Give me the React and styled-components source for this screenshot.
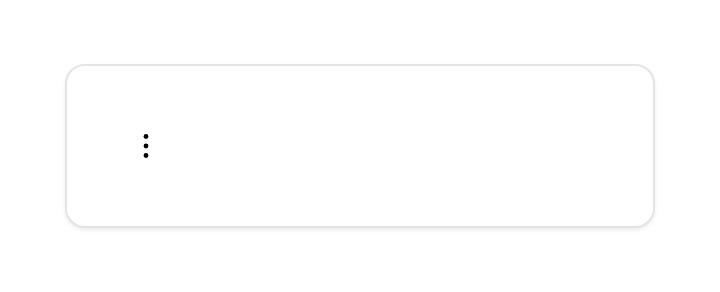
import React from "react";
import styled, { createGlobalStyle } from "styled-components";

const Global = createGlobalStyle`
  html, body { margin: 0; padding: 0; background: #ffffff; font-family: "Roboto", "Liberation Sans", sans-serif; }
`;

const Page = styled.div`
  padding: 64px 65px;
  box-sizing: border-box;
  width: 720px;
  height: 292px;
`;

const Card = styled.div`
  box-sizing: border-box;
  height: 164px;
  border: 2px solid #e4e4e4;
  border-radius: 20px;
  background: #fff;
  box-shadow: 0 2px 4px rgba(0, 0, 0, 0.08);
  display: flex;
  align-items: center;
  padding-left: 67px;
`;

const MenuButton = styled.button`
  width: 24px;
  height: 32px;
  padding: 0;
  border: none;
  background: transparent;
  display: flex;
  align-items: center;
  justify-content: center;
  cursor: pointer;
`;

const Dots = () => (
  <svg width="24" height="32" viewBox="0 0 24 32" aria-hidden="true">
    <circle cx="12" cy="6.5" r="2.4" fill="#000" />
    <circle cx="12" cy="16" r="2.4" fill="#000" />
    <circle cx="12" cy="25.5" r="2.4" fill="#000" />
  </svg>
);

export default function App() {
  return (
    <>
      <Global />
      <Page>
        <Card>
          <MenuButton aria-label="More options">
            <Dots />
          </MenuButton>
        </Card>
      </Page>
    </>
  );
}
